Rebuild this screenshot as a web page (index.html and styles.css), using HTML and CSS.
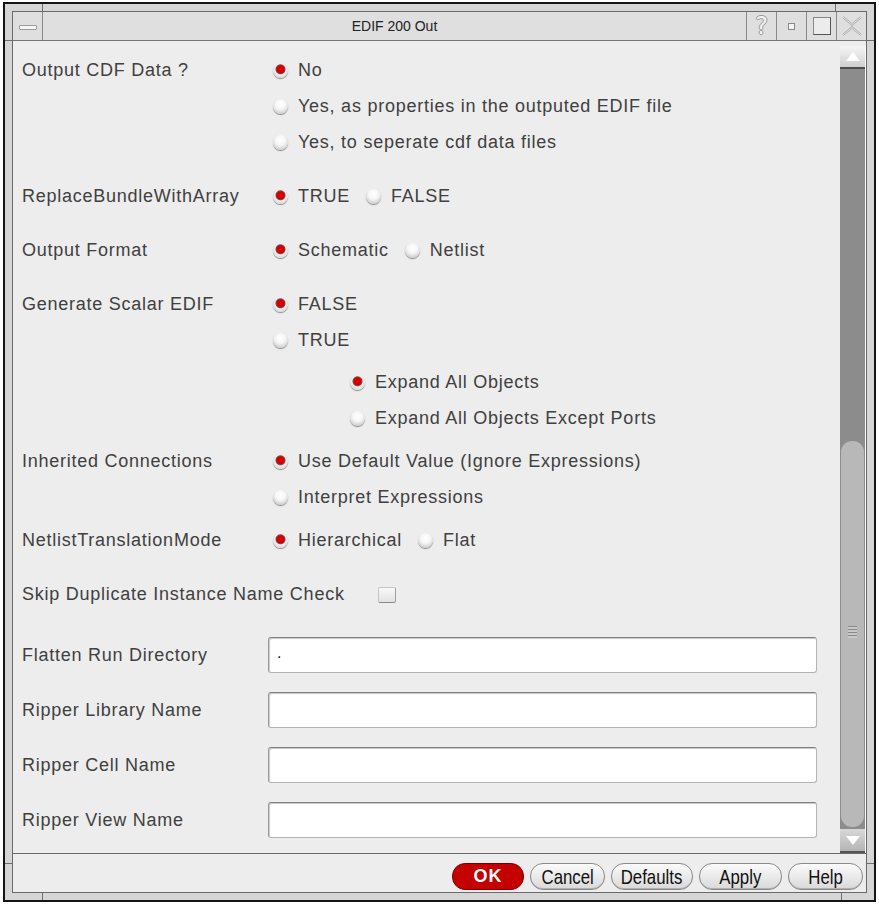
FILE: index.html
```html
<!DOCTYPE html>
<html>
<head>
<meta charset="utf-8">
<title>EDIF 200 Out</title>
<link rel="stylesheet" href="styles.css">
</head>
<body>
<div class="window">
  <span class="tick tick-t1"></span><span class="tick tick-t2"></span>
  <span class="tick tick-l1"></span><span class="tick tick-r1"></span>
  <span class="tick tick-l2"></span><span class="tick tick-r2"></span>
  <span class="tick tick-b1"></span><span class="tick tick-b2"></span>
  <div class="inner">
    <div class="titlebar">
      <div class="tb-btn tb-menu"><span class="dash"></span></div>
      <div class="title">EDIF 200 Out</div>
      <div class="tb-btn tb-help">?</div>
      <div class="tb-btn"><span class="mini"></span></div>
      <div class="tb-btn"><span class="maxbox"></span></div>
      <div class="tb-btn">
        <svg width="22" height="20" viewBox="0 0 22 20"><path d="M2 1 L11 8.5 L20 1 M2 19 L11 11.5 L20 19" fill="none" stroke="#a8a8a8" stroke-width="2.2"/><path d="M2 1 L11 8.5 L20 1 M2 19 L11 11.5 L20 19" fill="none" stroke="#f4f4f4" stroke-width="0.8"/></svg>
      </div>
    </div>
    <div class="content">
      <div class="form">
        <div class="row first">
          <div class="label">Output CDF Data ?</div>
          <div class="opts">
            <div class="opt"><span class="radio on"></span>No</div>
            <div class="opt"><span class="radio"></span>Yes, as properties in the outputed EDIF file</div>
            <div class="opt"><span class="radio"></span>Yes, to seperate cdf data files</div>
          </div>
        </div>
        <div class="row">
          <div class="label">ReplaceBundleWithArray</div>
          <div class="inline">
            <div class="opt"><span class="radio on"></span>TRUE</div>
            <div class="opt"><span class="radio"></span>FALSE</div>
          </div>
        </div>
        <div class="row">
          <div class="label">Output Format</div>
          <div class="inline">
            <div class="opt"><span class="radio on"></span>Schematic</div>
            <div class="opt"><span class="radio"></span>Netlist</div>
          </div>
        </div>
        <div class="row">
          <div class="label">Generate Scalar EDIF</div>
          <div class="opts">
            <div class="opt"><span class="radio on"></span>FALSE</div>
            <div class="opt"><span class="radio"></span>TRUE</div>
            <div class="sub">
              <div class="opt"><span class="radio on"></span>Expand All Objects</div>
              <div class="opt"><span class="radio"></span>Expand All Objects Except Ports</div>
            </div>
          </div>
        </div>
        <div class="row tight">
          <div class="label">Inherited Connections</div>
          <div class="opts">
            <div class="opt"><span class="radio on"></span>Use Default Value (Ignore Expressions)</div>
            <div class="opt"><span class="radio"></span>Interpret Expressions</div>
          </div>
        </div>
        <div class="row tight">
          <div class="label">NetlistTranslationMode</div>
          <div class="inline">
            <div class="opt"><span class="radio on"></span>Hierarchical</div>
            <div class="opt"><span class="radio"></span>Flat</div>
          </div>
        </div>
        <div class="row row-check">
          <div class="label">Skip Duplicate Instance Name Check</div>
          <span class="checkbox"></span>
        </div>
        <div class="row field-row first-field">
          <div class="label">Flatten Run Directory</div>
          <div class="field">.</div>
        </div>
        <div class="row field-row">
          <div class="label">Ripper Library Name</div>
          <div class="field"></div>
        </div>
        <div class="row field-row">
          <div class="label">Ripper Cell Name</div>
          <div class="field"></div>
        </div>
        <div class="row field-row">
          <div class="label">Ripper View Name</div>
          <div class="field"></div>
        </div>
      </div>
      <div class="scrollbar">
        <div class="sb-up"><svg width="14" height="9" viewBox="0 0 14 9"><path d="M7 0 L14 9 L0 9 Z" fill="#fff"/></svg></div>
        <div class="sb-track">
          <div class="sb-thumb"><span class="grip"></span></div>
        </div>
        <div class="sb-down"><svg width="14" height="9" viewBox="0 0 14 9"><path d="M0 0 L14 0 L7 9 Z" fill="#fff"/></svg></div>
      </div>
    </div>
    <div class="buttons">
      <div class="btn btn-ok">OK</div>
      <div class="btn btn-cancel"><span class="btn-text">Cancel</span></div>
      <div class="btn btn-defaults"><span class="btn-text">Defaults</span></div>
      <div class="btn btn-apply"><span class="btn-text">Apply</span></div>
      <div class="btn btn-help"><span class="btn-text">Help</span></div>
    </div>
  </div>
</div>
</body>
</html>
```
FILE: styles.css
```css
body {
  margin: 0;
  background: #ffffff;
  font-family: "Liberation Sans", Arial, sans-serif;
}

.window {
  position: relative;
  box-sizing: border-box;
  width: 873px;
  height: 900px;
  margin: 2px 0 0 3px;
  border: 2px solid #151515;
  padding: 7px;
  background: #d6d6d6;
}

.tick {
  position: absolute;
  background: #6e6e6e;
}
.tick-t1 { left: 37px; top: 0; width: 1px; height: 7px; }
.tick-t2 { left: 830px; top: 0; width: 1px; height: 7px; }
.tick-b1 { left: 37px; bottom: 0; width: 1px; height: 7px; }
.tick-b2 { left: 836px; bottom: 0; width: 1px; height: 7px; }
.tick-l1 { left: 0; top: 36px; width: 7px; height: 1px; }
.tick-r1 { right: 0; top: 36px; width: 7px; height: 1px; }
.tick-l2 { left: 0; top: 859px; width: 7px; height: 1px; }
.tick-r2 { right: 0; top: 859px; width: 7px; height: 1px; }

.inner {
  box-sizing: border-box;
  height: 100%;
  border: 1px solid #6a6a6a;
  display: flex;
  flex-direction: column;
  background: #ededed;
}

.titlebar {
  box-sizing: border-box;
  height: 29px;
  border-bottom: 1px solid #777;
  display: flex;
  background: #dfdfdf;
}

.tb-btn {
  width: 29px;
  border-left: 1px solid #8a8a8a;
  display: flex;
  align-items: center;
  justify-content: center;
}
.tb-menu {
  border-left: none;
  border-right: 1px solid #8a8a8a;
}
.dash {
  width: 16px;
  height: 3px;
  background: #f6f6f6;
  border: 1px solid #9a9a9a;
  border-radius: 1px;
  margin-top: 2px;
}
.tb-help {
  font-size: 24px;
  color: #f2f2f2;
  text-shadow: 1px 0 0 #999, -1px 0 0 #999, 0 1px 0 #999, 0 -1px 0 #999;
  font-family: "DejaVu Sans", sans-serif;
}
.mini {
  width: 5px;
  height: 5px;
  background: #f4f4f4;
  border: 1px solid #888;
}
.maxbox {
  width: 18px;
  height: 18px;
  box-sizing: border-box;
  border: 1px solid #888;
  border-right-color: #555;
  border-bottom-color: #555;
  background: #ececec;
}

.title {
  flex: 1;
  text-align: center;
  line-height: 28px;
  font-size: 14px;
  color: #222;
}

.content {
  flex: 1;
  display: flex;
  min-height: 0;
}

.form {
  flex: 1;
  padding: 11px 0 0 9px;
  color: #404040;
  font-size: 18px;
  letter-spacing: 0.75px;
}

.row {
  display: grid;
  grid-template-columns: 246px 1fr;
  margin-top: 18px;
}
.row.first { margin-top: 0; }
.row.tight { margin-top: 7px; }

.label {
  height: 36px;
  line-height: 36px;
  white-space: nowrap;
}

.opts {
  display: flex;
  flex-direction: column;
}
.inline {
  display: flex;
}
.inline .opt + .opt {
  margin-left: 11px;
}
.opt {
  height: 36px;
  display: flex;
  align-items: center;
  white-space: nowrap;
}
.sub {
  margin-top: 6px;
  padding-left: 77px;
}

.radio {
  flex: none;
  width: 15px;
  height: 15px;
  border-radius: 50%;
  margin: 0 10px 0 5px;
  background: radial-gradient(circle at 50% 35%, #ffffff 0%, #f6f6f6 40%, #d6d6d6 70%, #a0a0a0 100%);
  box-shadow: 0 1px 1px #8a8a8a;
}
.radio.on {
  background: radial-gradient(circle at 50% 42%, #f00000 0, #cc0000 3.5px, #8a4a4a 4.5px, #f0f0f0 5.5px, #d6d6d6 75%, #999 100%);
}

.row-check {
  display: flex;
  align-items: center;
}
.checkbox {
  width: 16px;
  height: 14px;
  margin-left: 33px;
  margin-top: 1px;
  background: linear-gradient(#f8f8f8, #e2e2e2);
  border: 1px solid #c4c4c4;
  border-bottom-color: #8a8a8a;
  border-right-color: #a0a0a0;
  border-radius: 2px;
}

.field-row { margin-top: 19px; }
.field-row.first-field { margin-top: 25px; }
.field {
  box-sizing: border-box;
  width: 549px;
  height: 36px;
  background: #ffffff;
  border: 1px solid #b4b4b4;
  border-top-color: #808080;
  border-left-color: #9a9a9a;
  border-radius: 3px;
  box-shadow: inset 1px 1px 1px #c8c8c8;
  padding-left: 8px;
  line-height: 30px;
  font-size: 16px;
  color: #111;
}

.scrollbar {
  width: 25px;
  margin-top: 5px;
  display: flex;
  flex-direction: column;
  border-right: 1px solid #fafafa;
}
.sb-up {
  box-sizing: border-box;
  height: 23px;
  background: linear-gradient(#f6f6f6, #cfcfcf);
  border-bottom: 2px solid #4e4e4e;
  display: flex;
  align-items: center;
  justify-content: center;
}
.sb-track {
  flex: 1;
  background: #8c8c8c;
  display: flex;
  flex-direction: column;
  justify-content: flex-end;
}
.sb-thumb {
  height: 386px;
  margin: 0 1px 2px 1px;
  background: #b8b8b8;
  border-radius: 11px;
  display: flex;
  justify-content: center;
}
.grip {
  margin-top: 185px;
  width: 9px;
  height: 12px;
  background: repeating-linear-gradient(#8a8a8a 0 1px, #c8c8c8 1px 3px);
}
.sb-down {
  box-sizing: border-box;
  height: 24px;
  background: linear-gradient(#d8d8d8, #b4b4b4);
  border-bottom: 2px solid #555;
  display: flex;
  align-items: center;
  justify-content: center;
}

.buttons {
  box-sizing: border-box;
  height: 39px;
  border-top: 1px solid #6a6a6a;
  display: flex;
  justify-content: flex-end;
  align-items: flex-start;
  padding: 9px 3px 0 0;
  gap: 6px;
}

.btn {
  box-sizing: border-box;
  height: 27px;
  border: 1px solid #8a8a8a;
  border-radius: 13px;
  background: linear-gradient(#fbfbfb, #d9d9d9);
  box-shadow: inset 0 -1px 0 #b0b0b0;
  display: flex;
  align-items: center;
  justify-content: center;
  font-family: "Liberation Sans", Arial, sans-serif;
  font-size: 21px;
  color: #111;
}
.btn-text {
  display: inline-block;
  transform: scaleX(0.8);
}
.btn-ok {
  width: 72px;
  background: #c40000;
  border-color: #7a0000;
  box-shadow: none;
  color: #fff;
  font-weight: bold;
  font-size: 18px;
  letter-spacing: 1px;
}
.btn-cancel { width: 75px; }
.btn-defaults { width: 82px; }
.btn-apply { width: 83px; }
.btn-help { width: 75px; }
```
